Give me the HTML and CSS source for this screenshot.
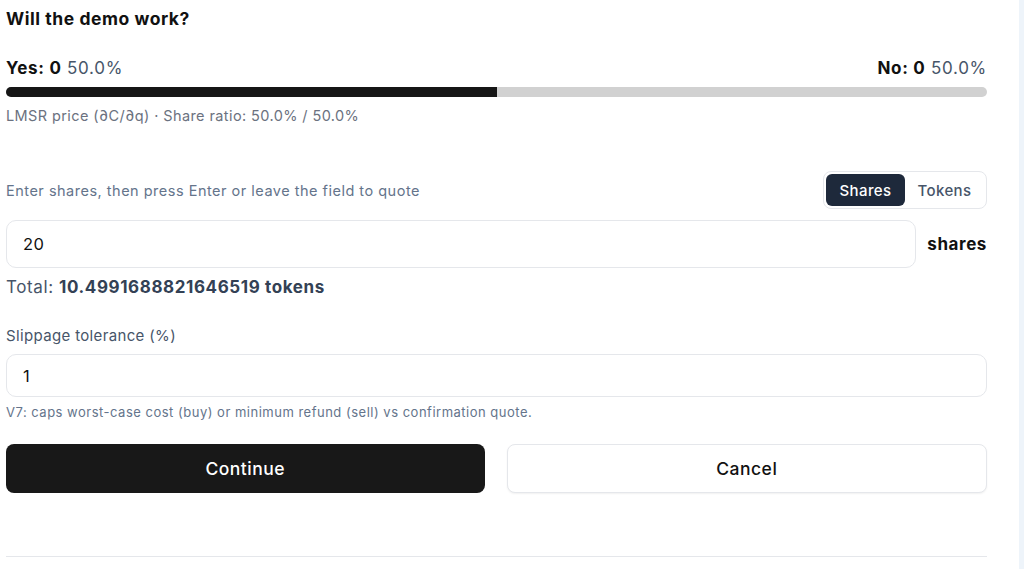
FILE: index.html
```html
<!DOCTYPE html>
<html lang="en">
<head>
    <meta charset="UTF-8">
    <meta name="viewport" content="width=device-width, initial-scale=1.0">
    <title>Trade - Will the demo work?</title>
    <link rel="stylesheet" href="styles.css">
</head>
<body>
    <main class="trade-panel">
        <h2 class="market-title">Will the demo work?</h2>

        <div class="odds-row">
            <span class="odds"><b>Yes: 0</b> <span class="pct">50.0%</span></span>
            <span class="odds"><b>No: 0</b> <span class="pct">50.0%</span></span>
        </div>
        <div class="odds-bar">
            <div class="odds-fill" style="width: 50%"></div>
        </div>
        <p class="odds-note">LMSR price (∂C/∂q) · Share ratio: 50.0% / 50.0%</p>

        <div class="quote-row">
            <p class="quote-hint">Enter shares, then press Enter or leave the field to quote</p>
            <div class="mode-toggle">
                <button class="mode-btn active">Shares</button>
                <button class="mode-btn">Tokens</button>
            </div>
        </div>

        <div class="amount-row">
            <input type="text" class="field amount-input" value="20">
            <span class="amount-unit">shares</span>
        </div>
        <p class="total">Total: <b>10.4991688821646519 tokens</b></p>

        <label class="field-label" for="slippage">Slippage tolerance (%)</label>
        <input type="text" id="slippage" class="field slippage-input" value="1">
        <p class="field-help">V7: caps worst-case cost (buy) or minimum refund (sell) vs confirmation quote.</p>

        <div class="actions">
            <button class="btn btn-primary">Continue</button>
            <button class="btn btn-secondary">Cancel</button>
        </div>

        <hr class="divider">
    </main>
    <aside class="side-strip"></aside>
</body>
</html>
```

FILE: styles.css
```css
:root {
    --ink: #111111;
    --slate: #475569;
    --muted: #64748b;
    --grey: #6b7280;
    --border: #e5e7eb;
    --navy: #1e293b;
    --track: #d1d1d1;
}
* { box-sizing: border-box; }
html, body { height: 100%; }
body {
    margin: 0;
    display: flex;
    font-family: Inter, 'Noto Sans', sans-serif;
    letter-spacing: 0.45px;
    color: var(--ink);
    background: #eef4fa;
    overflow: hidden;
}
.trade-panel {
    width: 1019px;
    flex-shrink: 0;
    background: #fff;
    padding: 7px 32px 0 6px;
}
.side-strip { flex: 1; }

.market-title {
    margin: 0;
    font-size: 17.5px;
    line-height: 24px;
    font-weight: 700;
    letter-spacing: 0.55px;
}

.odds-row {
    display: flex;
    justify-content: space-between;
    margin-top: 26px;
    font-size: 17px;
    line-height: 22px;
    letter-spacing: 0.7px;
}
.odds b { font-weight: 700; }
.odds .pct { color: var(--slate); }

.odds-bar {
    margin-top: 8px;
    height: 10px;
    border-radius: 5px;
    background: var(--track);
    overflow: hidden;
}
.odds-fill { height: 100%; background: #161616; }

.odds-note {
    margin: 9px 0 0;
    font-size: 14.5px;
    line-height: 20px;
    color: var(--grey);
    letter-spacing: 0.4px;
}

.quote-row {
    display: flex;
    justify-content: space-between;
    align-items: center;
    margin-top: 45px;
}
.quote-hint {
    margin: 0;
    font-size: 14.5px;
    color: var(--muted);
    letter-spacing: 0.5px;
}
.mode-toggle {
    display: flex;
    padding: 2px;
    border: 1px solid var(--border);
    border-radius: 8px;
    width: 164px;
    height: 38px;
}
.mode-btn {
    flex: 1;
    border: none;
    background: none;
    border-radius: 6px;
    font-family: inherit;
    font-size: 15px;
    font-weight: 500;
    letter-spacing: 0.4px;
    color: var(--slate);
    padding: 0;
}
.mode-btn.active {
    flex: 0 0 79px;
    background: var(--navy);
    color: #fff;
}

.amount-row {
    display: flex;
    align-items: center;
    gap: 11px;
    margin-top: 11px;
}
.field {
    display: block;
    width: 100%;
    border: 1px solid var(--border);
    border-radius: 10px;
    padding: 0 16px;
    font-family: inherit;
    font-size: 16.5px;
    letter-spacing: 0.4px;
    color: var(--ink);
    background: #fff;
    outline: none;
}
.amount-input { flex: 1; height: 48px; }
.amount-unit {
    font-size: 17px;
    font-weight: 700;
    letter-spacing: 0.6px;
}

.total {
    margin: 8px 0 0;
    font-size: 17px;
    line-height: 22px;
    color: var(--slate);
    letter-spacing: 0.6px;
}
.total b { color: #334155; }

.field-label {
    display: block;
    margin-top: 28px;
    font-size: 15px;
    line-height: 20px;
    font-weight: 400;
    color: var(--slate);
    letter-spacing: 0.35px;
}
.slippage-input { margin-top: 8px; height: 43px; }
.field-help {
    margin: 6px 0 0;
    font-size: 13px;
    line-height: 18px;
    color: var(--muted);
    letter-spacing: 0.5px;
}

.actions {
    display: flex;
    gap: 22px;
    margin-top: 23px;
}
.btn {
    flex: 1;
    height: 49px;
    border-radius: 8px;
    font-family: inherit;
    font-size: 17.5px;
    font-weight: 500;
    letter-spacing: 0.5px;
}
.btn-primary {
    background: #181818;
    color: #fff;
    border: none;
}
.btn-secondary {
    background: #fff;
    color: var(--ink);
    border: 1px solid var(--border);
    box-shadow: 0 1px 2px rgba(0, 0, 0, 0.06);
}

.divider {
    margin: 63px 0 0;
    border: none;
    border-top: 1px solid var(--border);
}
```
